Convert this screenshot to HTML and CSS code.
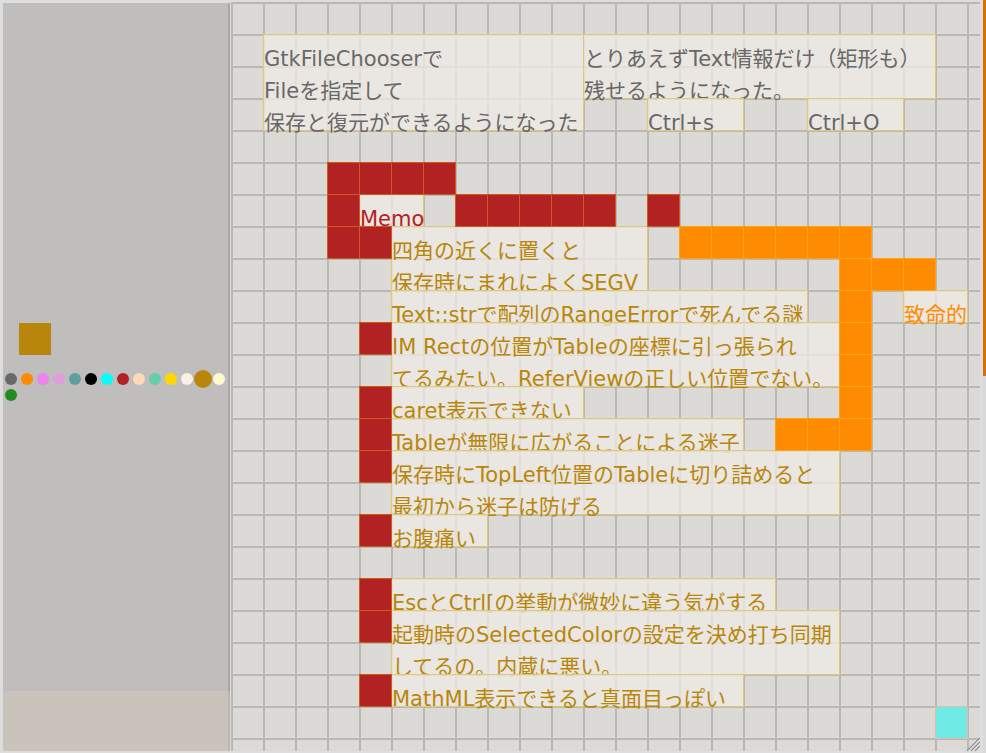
FILE: index.html
```html
<!DOCTYPE html>
<html lang="ja">
<head>
<meta charset="utf-8">
<title>Memo canvas</title>
<link rel="stylesheet" href="styles.css">
</head>
<body>
<div class="window">
  <aside class="sidebar">
    <div class="sidebar-top">
      <div class="current-color"></div>
      <div class="palette">
        <span class="dot c-dimgray"></span>
        <span class="dot c-darkorange"></span>
        <span class="dot c-violet"></span>
        <span class="dot c-plum"></span>
        <span class="dot c-cadetblue"></span>
        <span class="dot c-black"></span>
        <span class="dot c-cyan"></span>
        <span class="dot c-firebrick"></span>
        <span class="dot c-peachpuff"></span>
        <span class="dot c-aquamarine"></span>
        <span class="dot c-gold"></span>
        <span class="dot c-linen"></span>
        <span class="dot c-goldenrod selected"></span>
        <span class="dot c-lemon"></span>
        <span class="dot c-forestgreen"></span>
      </div>
    </div>
    <div class="sidebar-bottom"></div>
  </aside>

  <main class="canvas">
    <!-- notes -->
    <div class="note grey x1 y1 w10 h3">
      <div class="line">GtkFileChooserで</div>
      <div class="line">Fileを指定して</div>
      <div class="line">保存と復元ができるようになった</div>
    </div>
    <div class="note grey x11 y1 w11 h2">
      <div class="line">とりあえずText情報だけ（矩形も）</div>
      <div class="line">残せるようになった。</div>
    </div>
    <div class="note grey x13 y3 w3"><div class="line">Ctrl+s</div></div>
    <div class="note grey x18 y3 w3"><div class="line">Ctrl+O</div></div>

    <div class="note red-text x4 y6 w2"><div class="line">Memo</div></div>
    <div class="note gold x5 y7 w8 h2">
      <div class="line">四角の近くに置くと</div>
      <div class="line">保存時にまれによくSEGV</div>
    </div>
    <div class="note gold x5 y9 w13"><div class="line">Text::strで配列のRangeErrorで死んでる謎</div></div>
    <div class="note gold x5 y10 w14 h2">
      <div class="line">IM Rectの位置がTableの座標に引っ張られ</div>
      <div class="line">てるみたい。ReferViewの正しい位置でない。</div>
    </div>
    <div class="note gold x5 y12 w6"><div class="line">caret表示できない</div></div>
    <div class="note gold x5 y13 w11"><div class="line">Tableが無限に広がることによる迷子</div></div>
    <div class="note gold x5 y14 w14 h2">
      <div class="line">保存時にTopLeft位置のTableに切り詰めると</div>
      <div class="line">最初から迷子は防げる</div>
    </div>
    <div class="note gold x5 y16 w3"><div class="line">お腹痛い</div></div>
    <div class="note gold x5 y18 w12"><div class="line">EscとCtrl[の挙動が微妙に違う気がする</div></div>
    <div class="note gold x5 y19 w14 h2">
      <div class="line">起動時のSelectedColorの設定を決め打ち同期</div>
      <div class="line">してるの。内蔵に悪い。</div>
    </div>
    <div class="note gold x5 y21 w11"><div class="line">MathML表示できると真面目っぽい</div></div>
    <div class="note orange-text x21 y9 w2"><div class="line">致命的</div></div>

    <!-- red cells -->
    <div class="cell red x3 y5"></div>
    <div class="cell red x4 y5"></div>
    <div class="cell red x5 y5"></div>
    <div class="cell red x6 y5"></div>
    <div class="cell red x3 y6"></div>
    <div class="cell red x7 y6"></div>
    <div class="cell red x8 y6"></div>
    <div class="cell red x9 y6"></div>
    <div class="cell red x10 y6"></div>
    <div class="cell red x11 y6"></div>
    <div class="cell red x13 y6"></div>
    <div class="cell red x3 y7"></div>
    <div class="cell red x4 y7"></div>
    <div class="cell red x4 y10"></div>
    <div class="cell red x4 y12"></div>
    <div class="cell red x4 y13"></div>
    <div class="cell red x4 y14"></div>
    <div class="cell red x4 y16"></div>
    <div class="cell red x4 y18"></div>
    <div class="cell red x4 y19"></div>
    <div class="cell red x4 y21"></div>

    <!-- orange cells -->
    <div class="cell orange x14 y7"></div>
    <div class="cell orange x15 y7"></div>
    <div class="cell orange x16 y7"></div>
    <div class="cell orange x17 y7"></div>
    <div class="cell orange x18 y7"></div>
    <div class="cell orange x19 y7"></div>
    <div class="cell orange x19 y8"></div>
    <div class="cell orange x20 y8"></div>
    <div class="cell orange x21 y8"></div>
    <div class="cell orange x19 y9"></div>
    <div class="cell orange x19 y10"></div>
    <div class="cell orange x19 y11"></div>
    <div class="cell orange x19 y12"></div>
    <div class="cell orange x17 y13"></div>
    <div class="cell orange x18 y13"></div>
    <div class="cell orange x19 y13"></div>

    <div class="cell cyan x22 y22"></div>

    <svg class="grip" width="14" height="14" viewBox="0 0 14 14" aria-hidden="true">
      <g stroke="#f4f4f4" stroke-width="1">
        <line x1="14" y1="2" x2="2" y2="14"/>
        <line x1="14" y1="6" x2="6" y2="14"/>
        <line x1="14" y1="10" x2="10" y2="14"/>
      </g>
      <g stroke="#8c8c8a" stroke-width="1.2">
        <line x1="14" y1="1" x2="1" y2="14"/>
        <line x1="14" y1="5" x2="5" y2="14"/>
        <line x1="14" y1="9" x2="9" y2="14"/>
      </g>
    </svg>
  </main>

  <div class="gutter"></div>
  <div class="scrollbar"><div class="thumb"></div></div>
</div>
</body>
</html>
```

FILE: styles.css
```css
html, body {
  margin: 0;
  padding: 0;
}

body {
  background: #dddddd;
  font-family: "DejaVu Sans", "Noto Sans CJK JP", sans-serif;
}

.window {
  display: flex;
  width: 986px;
  height: 753px;
  background: #dddddd;
  overflow: hidden;
}

/* ---------- sidebar ---------- */
.sidebar {
  display: flex;
  flex-direction: column;
  width: 227px;
  margin: 3px 0 2px 3px;
}

.sidebar-top {
  flex: 1;
  background: #bfbebc;
  border-right: 2px solid #a8a8a6;
  padding-top: 320px;
}

.sidebar-bottom {
  height: 60px;
  background: #cac3bb;
  border-right: 2px solid #bdb6ae;
}

.current-color {
  width: 32px;
  height: 32px;
  margin-left: 16px;
  background: #b8860b;
}

.palette {
  display: flex;
  flex-wrap: wrap;
  width: 224px;
  margin-top: 16px;
}

.dot {
  width: 12px;
  height: 12px;
  margin: 2px;
  border-radius: 50%;
}

.dot.selected {
  width: 18px;
  height: 18px;
  margin: -1px;
}

.c-dimgray { background: #696969; }
.c-darkorange { background: #ff8c00; }
.c-violet { background: #ee82ee; }
.c-plum { background: #dda0dd; }
.c-cadetblue { background: #5f9ea0; }
.c-black { background: #000000; }
.c-cyan { background: #00ffff; }
.c-firebrick { background: #b22222; }
.c-peachpuff { background: #ffdab9; }
.c-aquamarine { background: #66cdaa; }
.c-gold { background: #ffd700; }
.c-linen { background: #faf0e6; }
.c-goldenrod { background: #b8860b; }
.c-lemon { background: #fffacd; }
.c-forestgreen { background: #228b22; }

/* ---------- canvas ---------- */
.canvas {
  position: relative;
  display: grid;
  grid-template-columns: repeat(24, 32px);
  grid-template-rows: repeat(24, 32px);
  width: 749px;
  height: 749px;
  margin: 2px 0 2px 1px;
  overflow: hidden;
  background-color: #dbdad6;
  background-image:
    linear-gradient(to right, #b9b8b4 2px, transparent 2px),
    linear-gradient(to bottom, #b9b8b4 2px, transparent 2px);
  background-size: 32px 32px;
}

.note {
  margin: 0 -1px -1px 0;
  background: rgba(238, 233, 228, 0.78);
  border: 1px solid #dfca72;
  font-size: 21px;
  line-height: 32px;
  white-space: nowrap;
}

.note .line {
  height: 32px;
  padding-top: 8px;
  box-sizing: border-box;
}

.grey { color: #686868; }
.gold { color: #b8860b; }
.red-text { color: #b22222; }
.orange-text { color: #ff8c00; }

.cell {
  margin: 0 -1px -1px 0;
  border: 1px solid transparent;
}

.cell.red {
  background: #b22222;
  border-color: #cf5a1e;
}

.cell.orange {
  background: #ff8c00;
  border-color: #ffa316;
}

.cell.cyan {
  background: #6feae5;
  border-color: #e9b6a6;
}

.grip {
  position: absolute;
  right: 0;
  bottom: 0;
}

/* column placement */
.x1 { grid-column-start: 2; }
.x3 { grid-column-start: 4; }
.x4 { grid-column-start: 5; }
.x5 { grid-column-start: 6; }
.x6 { grid-column-start: 7; }
.x7 { grid-column-start: 8; }
.x8 { grid-column-start: 9; }
.x9 { grid-column-start: 10; }
.x10 { grid-column-start: 11; }
.x11 { grid-column-start: 12; }
.x13 { grid-column-start: 14; }
.x14 { grid-column-start: 15; }
.x15 { grid-column-start: 16; }
.x16 { grid-column-start: 17; }
.x17 { grid-column-start: 18; }
.x18 { grid-column-start: 19; }
.x19 { grid-column-start: 20; }
.x20 { grid-column-start: 21; }
.x21 { grid-column-start: 22; }
.x22 { grid-column-start: 23; }

/* row placement */
.y1 { grid-row-start: 2; }
.y3 { grid-row-start: 4; }
.y5 { grid-row-start: 6; }
.y6 { grid-row-start: 7; }
.y7 { grid-row-start: 8; }
.y8 { grid-row-start: 9; }
.y9 { grid-row-start: 10; }
.y10 { grid-row-start: 11; }
.y11 { grid-row-start: 12; }
.y12 { grid-row-start: 13; }
.y13 { grid-row-start: 14; }
.y14 { grid-row-start: 15; }
.y16 { grid-row-start: 17; }
.y18 { grid-row-start: 19; }
.y19 { grid-row-start: 20; }
.y21 { grid-row-start: 22; }
.y22 { grid-row-start: 23; }

/* spans */
.w2 { grid-column-end: span 2; }
.w3 { grid-column-end: span 3; }
.w6 { grid-column-end: span 6; }
.w8 { grid-column-end: span 8; }
.w10 { grid-column-end: span 10; }
.w11 { grid-column-end: span 11; }
.w12 { grid-column-end: span 12; }
.w13 { grid-column-end: span 13; }
.w14 { grid-column-end: span 14; }
.h2 { grid-row-end: span 2; }
.h3 { grid-row-end: span 3; }

/* ---------- right edge ---------- */
.gutter {
  width: 3px;
}

.scrollbar {
  width: 3px;
  background: #d9d9d9;
}

.thumb {
  height: 376px;
  background: #dc6e0a;
}
```
